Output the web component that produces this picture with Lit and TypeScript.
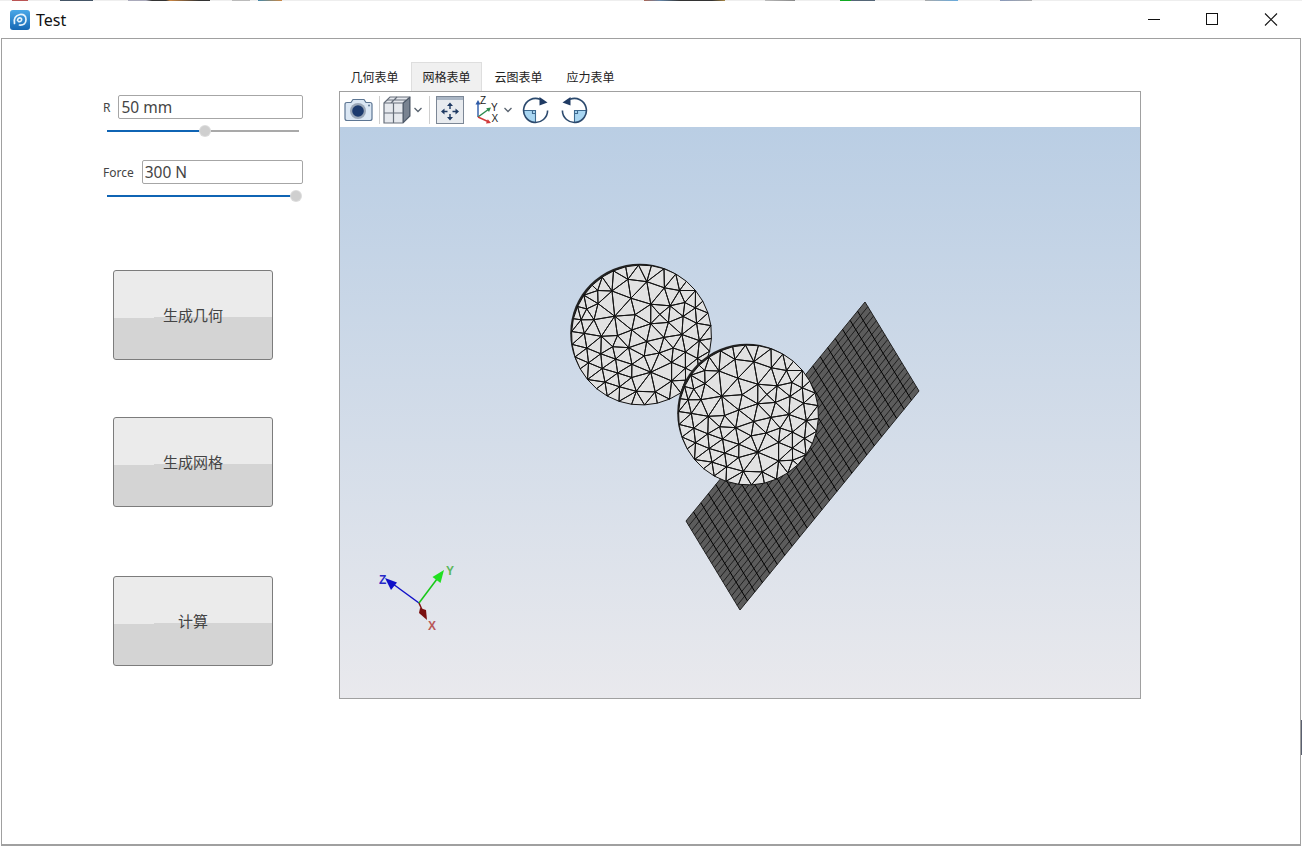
import { LitElement, html, svg, css } from "lit";
import { customElement, state } from "lit/decorators.js";

type Pt = [number, number];
type Tri = [number, number, number];

// interior nodes of the disc mesh, read off the reference (3x crop, disc centre at 243,238)
const NODES: Pt[] = [
  [115, 100], [160, 120], [205, 85], [218, 127], [262, 98], [310, 100], [355, 108], [258, 157],
  [325, 145], [375, 148], [412, 150], [115, 147], [65, 152], [150, 170], [220, 178], [298, 172],
  [372, 192], [410, 208], [100, 195], [55, 195], [180, 215], [270, 210], [330, 208], [75, 237],
  [120, 245], [175, 245], [218, 275], [265, 255], [318, 248], [368, 240], [412, 250], [70, 285],
  [115, 290], [162, 275], [265, 310], [310, 290], [350, 280], [388, 290], [75, 335], [155, 310],
  [230, 325], [340, 315], [115, 340], [165, 345], [270, 358], [375, 340], [412, 310], [125, 385],
  [180, 385], [225, 370], [330, 365], [290, 400], [235, 410], [375, 380],
];

const R = 70;
const BOUNDARY = 34;

function delaunay(points: Pt[]): Tri[] {
  const pts: Pt[] = [...points, [-1000, -1000], [1000, -1000], [0, 1000]];
  const n = points.length;
  let tris: Tri[] = [[n, n + 1, n + 2]];
  const inCircle = (t: Tri, p: Pt) => {
    const [a, b, c] = t.map((i) => pts[i]);
    const ax = a[0] - p[0], ay = a[1] - p[1];
    const bx = b[0] - p[0], by = b[1] - p[1];
    const cx = c[0] - p[0], cy = c[1] - p[1];
    const det =
      (ax * ax + ay * ay) * (bx * cy - cx * by) -
      (bx * bx + by * by) * (ax * cy - cx * ay) +
      (cx * cx + cy * cy) * (ax * by - bx * ay);
    const orient = (b[0] - a[0]) * (c[1] - a[1]) - (b[1] - a[1]) * (c[0] - a[0]);
    return orient > 0 ? det > 0 : det < 0;
  };
  for (let i = 0; i < n; i++) {
    const bad = tris.filter((t) => inCircle(t, pts[i]));
    const edges = new Map<string, [number, number]>();
    for (const t of bad) {
      for (const [u, v] of [[t[0], t[1]], [t[1], t[2]], [t[2], t[0]]]) {
        const key = u < v ? `${u}-${v}` : `${v}-${u}`;
        if (edges.has(key)) edges.delete(key);
        else edges.set(key, [u, v]);
      }
    }
    tris = tris.filter((t) => !bad.includes(t));
    for (const [u, v] of edges.values()) tris.push([u, v, i]);
  }
  return tris.filter((t) => t.every((i) => i < n));
}

function discMesh(): string {
  const pts: Pt[] = NODES.map(([x, y]) => [(x - 243) / 3, (y - 238) / 3]);
  const inner = pts.length;
  for (let i = 0; i < BOUNDARY; i++) {
    const a = (i / BOUNDARY) * Math.PI * 2 + 0.05;
    pts.push([R * Math.cos(a), R * Math.sin(a)]);
  }
  // even the hand-read nodes out a bit, the real mesher gives very regular triangles
  let tris = delaunay(pts);
  for (let pass = 0; pass < 4; pass++) {
    const sum = pts.map(() => [0, 0, 0]);
    for (const t of tris) {
      for (const i of t) {
        for (const j of t) {
          if (i !== j) {
            sum[i][0] += pts[j][0];
            sum[i][1] += pts[j][1];
            sum[i][2] += 1;
          }
        }
      }
    }
    for (let i = 0; i < inner; i++) {
      pts[i][0] += (sum[i][0] / sum[i][2] - pts[i][0]) * 0.7;
      pts[i][1] += (sum[i][1] / sum[i][2] - pts[i][1]) * 0.7;
    }
    tris = delaunay(pts);
  }
  const f = (p: Pt) => `${p[0].toFixed(1)} ${p[1].toFixed(1)}`;
  return tris.map((t) => `M${f(pts[t[0]])}L${f(pts[t[1]])}L${f(pts[t[2]])}Z`).join("");
}

// plate corners in page coordinates
const A: Pt = [865, 302];
const B: Pt = [919, 391];
const C: Pt = [740, 610];
const D: Pt = [686, 521];
const COLS = 24;
const ROWS = 19;

const lerp = (p: Pt, q: Pt, t: number): Pt => [p[0] + (q[0] - p[0]) * t, p[1] + (q[1] - p[1]) * t];

function lines(p1: Pt, p2: Pt, q1: Pt, q2: Pt, count: number): string {
  let d = "";
  for (let i = 1; i < count; i++) {
    const a = lerp(p1, p2, i / count);
    const b = lerp(q1, q2, i / count);
    d += `M${a[0].toFixed(1)} ${a[1].toFixed(1)}L${b[0].toFixed(1)} ${b[1].toFixed(1)}`;
  }
  return d;
}

@customElement("app-root")
class AppRoot extends LitElement {
  @state() tabs = ["几何表单", "网格表单", "云图表单", "应力表单"];
  @state() activeTab = 1;
  @state() actions = [
    { label: "生成几何", cls: "first" },
    { label: "生成网格", cls: "second" },
    { label: "计算", cls: "third" },
  ];

  static styles = css`
    :host {
      display: block;
      position: relative;
      width: 1302px;
      height: 847px;
      background: #fff;
      font-family: "Noto Sans", "Noto Sans CJK SC", sans-serif;
      overflow: hidden;
    }
    .strip {
      height: 1px;
      background: linear-gradient(
        90deg,
        #eee 12px, #b55 12px, #b55 28px, #eee 28px,
        #eee 60px, #456 60px, #456 93px, #eee 93px,
        #eee 128px, #aab 128px, #aab 146px, #333 152px, #333 166px, #c84 170px, #333 199px, #333 210px, #eee 210px,
        #eee 232px, #bbb 232px, #bbb 250px, #eee 250px,
        #eee 258px, #48a 258px, #c84 282px, #eee 282px,
        #eee 644px, #a65 644px, #68a 660px, #333 680px, #333 712px, #a84 725px, #eee 725px,
        #eee 765px, #bbb 765px, #888 795px, #eee 795px,
        #eee 840px, #1a2 840px, #1a2 851px, #567 851px, #567 875px, #eee 875px,
        #eee 925px, #aaa 925px, #6ad 958px, #eee 958px,
        #eee 1000px, #89b 1000px, #aaa 1032px, #eee 1032px
      );
    }
    .edge {
      position: absolute;
      left: 1301px;
      top: 720px;
      width: 1px;
      height: 35px;
      background: #5a6070;
    }
    .titlebar {
      display: flex;
      align-items: center;
      height: 37px;
      padding: 0 3px 0 10px;
      gap: 6px;
      background: #fff;
    }
    .title {
      font-size: 16px;
      color: #111;
      line-height: 20px;
    }
    .controls {
      margin-left: auto;
      display: flex;
    }
    .controls svg {
      display: block;
      width: 58px;
      height: 37px;
    }
    .window {
      box-sizing: border-box;
      width: 1300px;
      height: 808px;
      margin-left: 1px;
      border: 1px solid #a0a0a0;
      border-bottom-width: 2px;
      display: flex;
    }
    .panel {
      box-sizing: border-box;
      width: 337px;
      padding: 56px 0 0 101px;
      flex: none;
    }
    .field {
      display: flex;
      align-items: center;
      gap: 8px;
      width: 200px;
      height: 24px;
      font-size: 12px;
      color: #444;
    }
    .field input {
      box-sizing: border-box;
      flex: 1;
      min-width: 0;
      height: 24px;
      border: 1px solid #a6a6a6;
      border-radius: 2px;
      padding: 0 2px;
      font: 15.5px "Noto Sans", sans-serif;
      color: #444;
      background: #fff;
      outline: none;
    }
    .slider {
      position: relative;
      width: 192px;
      height: 12px;
      margin: 6px 0 23px 4px;
    }
    .slider.last {
      margin-bottom: 0;
    }
    .track {
      position: absolute;
      left: 0;
      right: 0;
      top: 5px;
      height: 2px;
      background: #a9a9a9;
    }
    .fill {
      position: absolute;
      left: 0;
      top: 5px;
      height: 2px;
      background: #0f64b4;
    }
    .thumb {
      position: absolute;
      top: 1px;
      width: 10px;
      height: 10px;
      margin-left: -5px;
      border-radius: 50%;
      background: #cfcfcf;
      box-shadow: 0 0 0 1px #dcdcdc;
    }
    .action {
      box-sizing: border-box;
      display: flex;
      align-items: center;
      justify-content: center;
      width: 160px;
      height: 90px;
      margin-left: 10px;
      padding-bottom: 2px;
      border: 1px solid #7c7c7c;
      border-radius: 3px;
      background: linear-gradient(179.6deg, #ebebeb 52.5%, #d4d4d4 52.5%);
      font-size: 15px;
      color: #444;
    }
    .action.first {
      margin-top: 68px;
    }
    .action.second {
      margin-top: 57px;
    }
    .action.third {
      margin-top: 69px;
    }
    .main {
      padding-top: 23px;
    }
    .tabs {
      display: flex;
      gap: 1px;
      height: 29px;
    }
    .tab {
      box-sizing: border-box;
      width: 71px;
      display: flex;
      align-items: center;
      justify-content: center;
      font-size: 12px;
      color: #222;
      border: 1px solid transparent;
      border-bottom: none;
    }
    .tab.active {
      background: #f0f0f0;
      border-color: #dedede;
    }
    .viewer {
      box-sizing: border-box;
      width: 802px;
      height: 608px;
      border: 1px solid #a0a0a0;
      display: flex;
      flex-direction: column;
    }
    .toolbar {
      display: flex;
      align-items: center;
      height: 35px;
      padding-left: 4px;
      background: #fff;
      flex: none;
    }
    .toolbar svg {
      display: block;
      flex: none;
    }
    .sep {
      width: 1px;
      height: 28px;
      background: #cfcfcf;
      flex: none;
    }
    .ml2 { margin-left: 2px; }
    .ml3 { margin-left: 3px; }
    .ml6 { margin-left: 6px; }
    .ml9 { margin-left: 9px; }
    .ml10 { margin-left: 10px; }
    .ml11 { margin-left: 11px; }
    .canvas {
      flex: 1;
      background: linear-gradient(#bacee4, #e9e9ed);
    }
    .canvas svg {
      display: block;
      width: 800px;
      height: 571px;
    }
    .triad text {
      font: bold 12px "Liberation Sans", sans-serif;
    }
  `;

  chevron() {
    return html`<svg class="ml2" width="10" height="8" viewBox="0 0 10 8">
      <path d="M1.500 2 5 5.500 8.500 2" fill="none" stroke="#5a6470" stroke-width="1.300" />
    </svg>`;
  }

  renderToolbar() {
    return html`
      <div class="toolbar">
        <svg width="29" height="24" viewBox="0 0 29 24">
          <path d="M1 6.500q0-2 2-2h4l2-3h11l2 3h4q2 0 2 2v14q0 2-2 2H3q-2 0-2-2z" fill="#dbe7f4" stroke="#5d7693" stroke-width="1.200" />
          <circle cx="14" cy="13" r="8" fill="#9aa7b8" />
          <circle cx="14" cy="13" r="5.800" fill="#1c3a6e" />
          <circle cx="25" cy="7.500" r="1" fill="#5d7693" />
        </svg>
        <div class="sep ml6"></div>
        <svg class="ml3" width="28" height="28" viewBox="0 0 28 28">
          <path d="M1 7 7 1h20v19l-7 7H1z" fill="#e6e9ee" stroke="#666e7a" stroke-width="1.200" />
          <path d="M1 7h19v20M20 7l7-6M1 17h19M10.500 7v20M4 4h19M14 1 8 7" fill="none" stroke="#666e7a" stroke-width="1.200" />
          <path d="M20 7l7-6v19l-7 7z" fill="#1f2f45" opacity=".55" />
        </svg>
        ${this.chevron()}
        <div class="sep ml6"></div>
        <svg class="ml6" width="28" height="28" viewBox="0 0 28 28">
          <rect x=".5" y=".5" width="27" height="27" fill="#e8ebef" stroke="#7c8796" />
          <rect x="1" y="1" width="26" height="3" fill="#a9b5c4" />
          <g fill="#1f3a63">
            <path d="M14 6.500l3 3.500h-2.300v3h-1.400v-3H11z" />
            <path d="M14 24.500l-3-3.500h2.300v-3h1.400v3H17z" />
            <path d="M5 15.500l3.500-3v2.300h3v1.400h-3v2.300z" />
            <path d="M23 15.500l-3.500 3v-2.300h-3v-1.400h3v-2.300z" />
          </g>
        </svg>
        <svg class="ml11" width="26" height="28" viewBox="0 0 26 28">
          <path d="M3 21V7" stroke="#2c5aa8" stroke-width="1.400" />
          <path d="M3 4l2.500 4.500h-5z" fill="#2c5aa8" />
          <path d="M3 21l11-8" stroke="#2d8a4e" stroke-width="1.400" />
          <path d="M16 11.500l-2 4.500-2.800-3.800z" fill="#2d8a4e" />
          <path d="M3 21l11 5" stroke="#d23a3a" stroke-width="1.400" />
          <path d="M16 27l-5 .5 1.800-4.200z" fill="#d23a3a" />
          <g font-family="Liberation Sans, sans-serif" font-size="10" fill="#222">
            <text x="5" y="8">Z</text>
            <text x="16" y="15">Y</text>
            <text x="16.500" y="26">X</text>
          </g>
        </svg>
        ${this.chevron()}
        <svg class="ml9" width="28" height="28" viewBox="0 0 28 28">
          <path d="M13.500 14.500H1.800A12 12 0 0 0 13.500 26.300z" fill="#a8d6f2" />
          <path d="M1.800 14.500h11.700v11.800M10.500 14.500v3h3" fill="none" stroke="#3d6a90" stroke-width="1.100" />
          <path d="M25.600 14.500A12 12 0 1 1 18 3.300" fill="none" stroke="#2c4a6e" stroke-width="1.600" />
          <path d="M17.500 1 25.500 6.500 17.500 9.500z" fill="#1f3a63" />
        </svg>
        <svg class="ml10" width="28" height="28" viewBox="0 0 28 28">
          <path d="M14.500 14.500h11.700A12 12 0 0 1 14.500 26.300z" fill="#a8d6f2" />
          <path d="M26.200 14.500H14.500v11.800M17.500 14.500v3h-3" fill="none" stroke="#3d6a90" stroke-width="1.100" />
          <path d="M2.400 14.500A12 12 0 1 0 10 3.300" fill="none" stroke="#2c4a6e" stroke-width="1.600" />
          <path d="M10.500 1 2.500 6.500 10.500 9.500z" fill="#1f3a63" />
        </svg>
      </div>
    `;
  }

  renderScene() {
    const mesh = discMesh();
    const plateCols = lines(A, D, B, C, COLS);
    const plateRows = lines(A, B, D, C, ROWS);
    const disc = (cx: number, cy: number) => svg`
      <g transform="translate(${cx} ${cy})">
        <circle cx="-1.800" cy="-1.800" r="69.500" fill="#222" />
        <path d=${mesh} fill="#e2e2e2" stroke="#121212" stroke-width="1" stroke-linejoin="round" />
      </g>
    `;
    return html`
      <svg viewBox="340 127 800 571">
        <path d="M${A}L${B}L${C}L${D}Z" fill="#5c5c5c" stroke="#222" />
        <path d=${plateRows} fill="none" stroke="#1a1a1a" stroke-width=".9" />
        <path d=${plateCols} fill="none" stroke="#000" stroke-width="1" />
        ${disc(641.5, 335)} ${disc(748.5, 415)}
        <g class="triad">
          <path d="M419 603 393 584" stroke="#1010c8" stroke-width="1.500" />
          <path d="M385 578 397 582.500 391 590z" fill="#1010c8" />
          <path d="M419 603 437 579" stroke="#18c818" stroke-width="1.500" />
          <path d="M444 570 440.500 583 432.500 577z" fill="#20e020" />
          <path d="M419 603 423 612" stroke="#7a1010" stroke-width="1.500" />
          <path d="M420 608 426 610 427 620 419 613z" fill="#7a1010" />
          <text x="379" y="584" fill="#2828c8">Z</text>
          <text x="446" y="575" fill="#5cb85c">Y</text>
          <text x="428" y="630" fill="#b85858">X</text>
        </g>
      </svg>
    `;
  }

  render() {
    return html`
      <div class="strip"></div>
      <div class="titlebar">
        <svg width="20" height="20" viewBox="0 0 20 20">
          <defs>
            <linearGradient id="logo" x1="0" y1="0" x2="0" y2="1">
              <stop offset="0" stop-color="#4aa8e8" />
              <stop offset="1" stop-color="#1668b4" />
            </linearGradient>
          </defs>
          <rect width="20" height="20" rx="3" fill="url(#logo)" />
          <path d="M4.500 13.500Q3 6 10 4.500q6-.5 6 5 0 6-6.500 5.500M7.500 10.500q.5-3 3-2.500 2 1 .5 3-1 1-2.500.5" fill="none" stroke="#e8f4fc" stroke-width="1.700" stroke-linecap="round" />
        </svg>
        <div class="title">Test</div>
        <div class="controls">
          <svg viewBox="0 0 58 37"><path d="M23 18.500h12" stroke="#111" /></svg>
          <svg viewBox="0 0 58 37"><rect x="23.500" y="12.500" width="11" height="11" fill="none" stroke="#111" /></svg>
          <svg viewBox="0 0 58 37"><path d="M24 12.500 36 24.500M36 12.500 24 24.500" stroke="#111" stroke-width="1.100" /></svg>
        </div>
      </div>
      <div class="window">
        <div class="panel">
          <div class="field"><span>R</span><input .value=${"50 mm"} /></div>
          <div class="slider">
            <div class="track"></div>
            <div class="fill" style="width:51%"></div>
            <div class="thumb" style="left:51%"></div>
          </div>
          <div class="field"><span>Force</span><input .value=${"300 N"} /></div>
          <div class="slider last">
            <div class="track"></div>
            <div class="fill" style="width:98.4%"></div>
            <div class="thumb" style="left:98.4%"></div>
          </div>
          ${this.actions.map((a) => html`<div class="action ${a.cls}">${a.label}</div>`)}
        </div>
        <div class="main">
          <div class="tabs">
            ${this.tabs.map(
              (t, i) => html`<div class="tab ${i === this.activeTab ? "active" : ""}">${t}</div>`,
            )}
          </div>
          <div class="viewer">
            ${this.renderToolbar()}
            <div class="canvas">${this.renderScene()}</div>
          </div>
        </div>
      </div>
      <div class="edge"></div>
    `;
  }
}

export default AppRoot;
